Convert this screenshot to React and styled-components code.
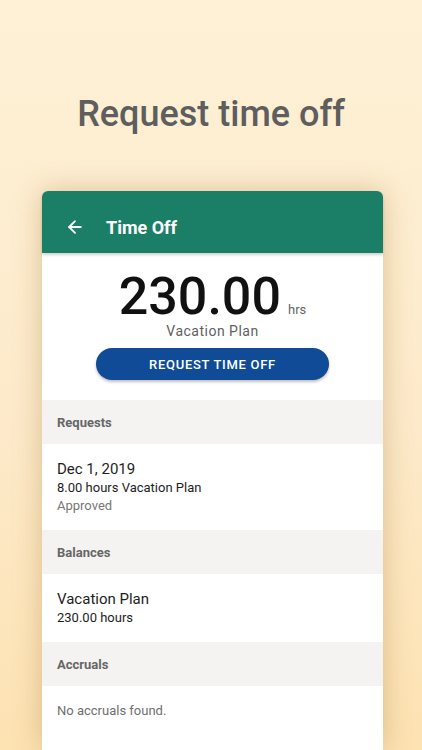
import styled, { createGlobalStyle } from 'styled-components'
import { ArrowLeft } from 'lucide-react'

const Global = createGlobalStyle`
    html, body {
        margin: 0;
        padding: 0;
    }
    body {
        font-family: Roboto, "Liberation Sans", sans-serif;
    }
`

const sections = [
    {
        title: 'Requests',
        items: [
            { main: 'Dec 1, 2019', sub: '8.00 hours Vacation Plan', note: 'Approved' },
        ],
    },
    {
        title: 'Balances',
        items: [{ main: 'Vacation Plan', sub: '230.00 hours' }],
    },
    {
        title: 'Accruals',
        empty: 'No accruals found.',
    },
]

const App = () => {
    return (
        <Page>
            <Global />
            <Headline>Request time off</Headline>
            <Card>
                <TopBar>
                    <BackButton>
                        <ArrowLeft size={20} strokeWidth={2.2} />
                    </BackButton>
                    <BarTitle>Time Off</BarTitle>
                </TopBar>
                <Summary>
                    <Amount>
                        <Big>230.00</Big>
                        <Unit>hrs</Unit>
                    </Amount>
                    <PlanName>Vacation Plan</PlanName>
                    <RequestButton>Request Time Off</RequestButton>
                </Summary>
                {sections.map((s) => (
                    <Section key={s.title}>
                        <SectionHead>{s.title}</SectionHead>
                        {s.items &&
                            s.items.map((it) => (
                                <Item key={it.main}>
                                    <Main>{it.main}</Main>
                                    <Sub>{it.sub}</Sub>
                                    {it.note && <Note>{it.note}</Note>}
                                </Item>
                            ))}
                        {s.empty && <Empty>{s.empty}</Empty>}
                    </Section>
                ))}
            </Card>
        </Page>
    )
}

const Page = styled.div`
    width: 422px;
    height: 750px;
    overflow: hidden;
    background: linear-gradient(180deg, #fef1d6 0%, #fdeacb 55%, #fde2b2 100%);
    display: flex;
    flex-direction: column;
`
const Headline = styled.h1`
    margin: 0;
    padding-top: 91px;
    height: 46px;
    line-height: 46px;
    text-align: center;
    font-size: 36px;
    font-weight: 500;
    color: #5e5e5e;
`
const Card = styled.div`
    margin: 54px 0 0 42px;
    width: 341px;
    flex: 1;
    background: #fff;
    border-radius: 6px 6px 0 0;
    box-shadow: 0 0 28px rgba(160, 120, 50, 0.38);
    display: flex;
    flex-direction: column;
`
const TopBar = styled.div`
    height: 62px;
    box-sizing: border-box;
    padding-top: 10px;
    background: #1b7e66;
    border-radius: 6px 6px 0 0;
    display: flex;
    align-items: center;
    box-shadow: 0 2px 3px rgba(0, 0, 0, 0.18);
    position: relative;
    z-index: 1;
`
const BackButton = styled.div`
    width: 62px;
    display: flex;
    justify-content: center;
    padding-left: 2px;
    color: #fff;
`
const BarTitle = styled.div`
    color: #fff;
    font-size: 18px;
    font-weight: 700;
`
const Summary = styled.div`
    height: 147px;
    display: flex;
    flex-direction: column;
    align-items: center;
    padding-top: 19px;
    box-sizing: border-box;
`
const Amount = styled.div`
    display: flex;
    align-items: baseline;
    height: 50px;
`
const Big = styled.span`
    font-size: 52px;
    font-weight: 500;
    line-height: 50px;
    color: #111;
`
const Unit = styled.span`
    font-size: 13px;
    color: #666;
    margin-left: 7px;
`
const PlanName = styled.div`
    font-size: 14px;
    letter-spacing: 0.5px;
    color: #5f5f5f;
    line-height: 18px;
`
const RequestButton = styled.button`
    margin-top: 8px;
    width: 233px;
    height: 32px;
    border: none;
    border-radius: 16px;
    background: #0f4b97;
    color: #fff;
    font-family: Roboto, "Liberation Sans", sans-serif;
    font-size: 13px;
    font-weight: 500;
    letter-spacing: 0.7px;
    text-transform: uppercase;
    box-shadow: 0 2px 3px rgba(0, 0, 0, 0.25);
`
const Section = styled.div`
    display: flex;
    flex-direction: column;
`
const SectionHead = styled.div`
    height: 44px;
    background: #f4f3f2;
    display: flex;
    align-items: center;
    padding-left: 15px;
    font-size: 13px;
    font-weight: 700;
    color: #666;
`
const Item = styled.div`
    padding: 15px 15px;
    display: flex;
    flex-direction: column;
`
const Main = styled.div`
    font-size: 15px;
    line-height: 20px;
    color: #1e1e1e;
`
const Sub = styled.div`
    font-size: 13px;
    line-height: 18px;
    color: #1e1e1e;
`
const Note = styled.div`
    font-size: 13px;
    line-height: 18px;
    color: #777;
`
const Empty = styled.div`
    padding: 16px 15px;
    font-size: 13px;
    line-height: 18px;
    color: #6f6f6f;
`

export default App
